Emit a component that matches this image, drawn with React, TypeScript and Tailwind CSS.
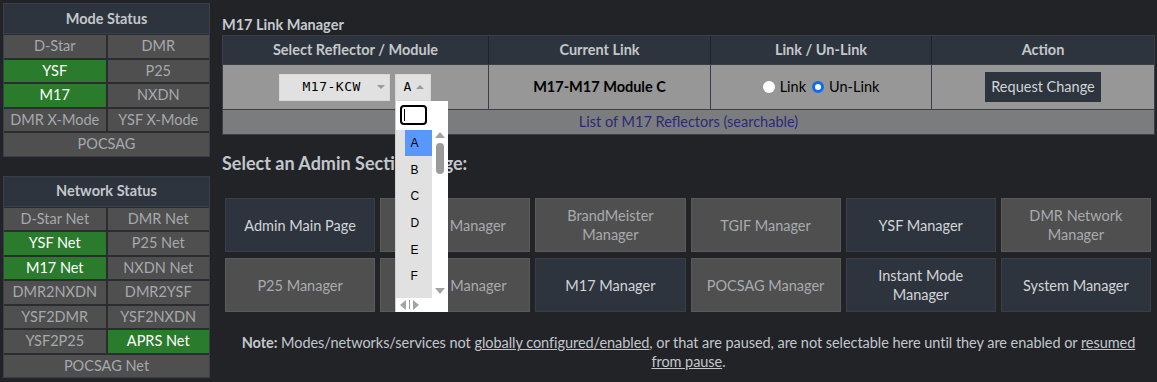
import React from 'react';

type Cell = { label: string; on?: boolean; wide?: boolean };

const modes: Cell[] = [
  { label: 'D-Star' },
  { label: 'DMR' },
  { label: 'YSF', on: true },
  { label: 'P25' },
  { label: 'M17', on: true },
  { label: 'NXDN' },
  { label: 'DMR X-Mode' },
  { label: 'YSF X-Mode' },
  { label: 'POCSAG', wide: true },
];

const nets: Cell[] = [
  { label: 'D-Star Net' },
  { label: 'DMR Net' },
  { label: 'YSF Net', on: true },
  { label: 'P25 Net' },
  { label: 'M17 Net', on: true },
  { label: 'NXDN Net' },
  { label: 'DMR2NXDN' },
  { label: 'DMR2YSF' },
  { label: 'YSF2DMR' },
  { label: 'YSF2NXDN' },
  { label: 'YSF2P25' },
  { label: 'APRS Net', on: true },
  { label: 'POCSAG Net', wide: true },
];

const pages = [
  { label: 'Admin Main Page', dark: true },
  { label: 'D-Star Manager' },
  { label: 'BrandMeister Manager' },
  { label: 'TGIF Manager' },
  { label: 'YSF Manager', dark: true },
  { label: 'DMR Network Manager' },
  { label: 'P25 Manager' },
  { label: 'NXDN Manager' },
  { label: 'M17 Manager', dark: true },
  { label: 'POCSAG Manager' },
  { label: 'Instant Mode Manager', dark: true },
  { label: 'System Manager', dark: true },
];

const StatusPanel = ({ title, cells }: { title: string; cells: Cell[] }) => (
  <div className="border border-[#3a3f47] bg-[#2a2c30]">
    <div className="h-[30px] flex items-center justify-center bg-[#2e343d] text-[14.5px] font-bold text-[#c3c7cc] border-b border-[#3a3f47]">
      {title}
    </div>
    <div className="grid grid-cols-2 gap-[2px] pt-[1px]">
      {cells.map((c) => (
        <div
          key={c.label}
          className={`h-[22.5px] flex items-center justify-center text-[14.5px] ${
            c.wide ? 'col-span-2' : ''
          } ${c.on ? 'bg-[#2b7b2d] text-white' : 'bg-[#4f4f4f] text-[#a6a9ad]'}`}
        >
          {c.label}
        </div>
      ))}
    </div>
  </div>
);

// open list of the module picker, drawn over the page
const ModuleDropdown = () => (
  <div className="absolute left-[-1px] top-[26px] w-[53px] h-[211px] bg-white z-10 border-l border-[#cfcfcf]">
    <div className="w-[35px] h-[29px] flex items-center justify-center bg-white">
      <div className="w-[27px] h-[20px] border-2 border-black rounded-[4px] flex items-center pl-[2px]">
        <div className="w-[1px] h-[12px] bg-black" />
      </div>
    </div>
    <div className="flex h-[168px]">
      <div className="w-[37px] bg-[#e1e1e1] pl-[9px] font-['Liberation_Sans',sans-serif] text-[12px] text-black">
        {['A', 'B', 'C', 'D', 'E', 'F'].map((m, i) => (
          <div
            key={m}
            className={`h-[26.7px] flex items-center pl-[6px] ${i === 0 ? 'bg-[#5897fb]' : ''}`}
          >
            {m}
          </div>
        ))}
      </div>
      <div className="w-[16px] flex flex-col items-center bg-white">
        <div className="mt-[2px] w-0 h-0 border-l-[5px] border-r-[5px] border-b-[6px] border-l-transparent border-r-transparent border-b-[#a3a3a3]" />
        <div className="mt-[5px] w-[8px] h-[31px] rounded-full bg-[#9a9a9a]" />
        <div className="flex-1" />
        <div className="mb-[4px] w-0 h-0 border-l-[5px] border-r-[5px] border-t-[6px] border-l-transparent border-r-transparent border-t-[#a3a3a3]" />
      </div>
    </div>
    <div className="h-[14px] flex items-center pl-[4px] gap-[3px]">
      <div className="w-0 h-0 border-t-[5px] border-b-[5px] border-r-[6px] border-t-transparent border-b-transparent border-r-[#a3a3a3]" />
      <div className="w-[1px] h-[9px] bg-[#9a9a9a]" />
      <div className="w-0 h-0 border-t-[5px] border-b-[5px] border-l-[6px] border-t-transparent border-b-transparent border-l-[#a3a3a3]" />
    </div>
  </div>
);

const App = () => {
  return (
    <div className="w-[1157px] h-[382px] bg-[#212327] font-['Lato',sans-serif] flex overflow-hidden">
      <div className="w-[207px] ml-[3px] mt-[3px] flex flex-col gap-[19px]">
        <StatusPanel title="Mode Status" cells={modes} />
        <StatusPanel title="Network Status" cells={nets} />
      </div>

      <div className="ml-[12px] w-[933px] pt-[15px]">
        <h2 className="text-[14.5px] font-bold text-[#c6cacf] leading-[19px] mb-[1px]">M17 Link Manager</h2>
        <div className="border border-[#3a3f47]">
          <div className="grid grid-cols-[265px_222px_221px_1fr] bg-[#2e343d] text-[14.5px] font-bold text-[#c3c7cc]">
            {['Select Reflector / Module', 'Current Link', 'Link / Un-Link', 'Action'].map((h, i) => (
              <div
                key={h}
                className={`h-[28px] flex items-center justify-center ${i > 0 ? 'border-l border-[#1f2226]' : ''}`}
              >
                {h}
              </div>
            ))}
          </div>
          <div className="grid grid-cols-[265px_222px_221px_1fr] bg-[#979797] border-t border-[#3a3f47]">
            <div className="h-[44px] flex items-center justify-center gap-[5px] pr-[2px]">
              <div className="w-[111px] h-[27px] bg-[#e1e1e1] flex items-center pl-[23px] text-black font-['DejaVu_Sans_Mono',monospace] border border-[#d8d8d8]">
                <span className="tracking-[0.5px] text-[13px]">M17-KCW</span>
                <span className="ml-auto mr-[4px] w-0 h-0 border-l-[4px] border-r-[4px] border-t-[4px] border-l-transparent border-r-transparent border-t-[#9a9a9a]" />
              </div>
              <div className="relative w-[36px] h-[27px] bg-[#e1e1e1] flex items-center pl-[8px] text-[13px] text-black font-['DejaVu_Sans_Mono',monospace] border border-[#d8d8d8]">
                <span>A</span>
                <span className="ml-[5px] w-0 h-0 border-l-[4px] border-r-[4px] border-b-[4px] border-l-transparent border-r-transparent border-b-[#9a9a9a]" />
                <ModuleDropdown />
              </div>
            </div>
            <div className="h-[44px] flex items-center justify-center border-l border-[#3a3f47] text-[14.5px] font-bold text-black">
              M17-M17 Module C
            </div>
            <div className="h-[44px] flex items-center justify-center border-l border-[#3a3f47] text-[14.5px] text-black">
              <span className="w-[12px] h-[12px] rounded-full bg-white mr-[5px]" />
              <span>Link</span>
              <span className="ml-[6px] w-[12px] h-[12px] rounded-full bg-white border-[3px] border-[#0b6cf0] mr-[5px]" />
              <span>Un-Link</span>
            </div>
            <div className="h-[44px] flex items-center justify-center border-l border-[#3a3f47]">
              <button className="h-[30px] px-[6px] bg-[#2e343d] text-[14.5px] text-[#d0d4d8]">Request Change</button>
            </div>
          </div>
          <div className="h-[25px] bg-[#7b7c7e] border-t border-[#3a3f47] flex items-center justify-center text-[14.5px] text-[#2b2a78]">
            List of M17 Reflectors (searchable)
          </div>
        </div>

        <h2 className="mt-[17px] text-[18px] font-bold text-[#c3c7cc] leading-[22px]">Select an Admin Section/Page:</h2>

        <div className="mt-[24px] ml-[3px] grid grid-cols-6 gap-x-[5px] gap-y-[6px] w-[926px]">
          {pages.map((p) => (
            <div
              key={p.label}
              className={`h-[54px] flex items-center justify-center text-center px-[10px] text-[14.5px] leading-[19px] border ${
                p.dark
                  ? 'bg-[#2e343d] border-[#3a3f47] text-[#d2d5d9]'
                  : 'bg-[#4f4f4f] border-[#5a5a5a] text-[#a8abae]'
              }`}
            >
              {p.label}
            </div>
          ))}
        </div>

        <p className="mt-[21px] text-center text-[14.5px] leading-[19px] text-[#c3c7cc] tracking-[-0.05px] px-[12px]">
          <b>Note:</b> Modes/networks/services not <u>globally configured/enabled</u>, or that are paused, are not
          selectable here until they are enabled or <u>resumed from pause</u>.
        </p>
      </div>
    </div>
  );
};

export default App;
